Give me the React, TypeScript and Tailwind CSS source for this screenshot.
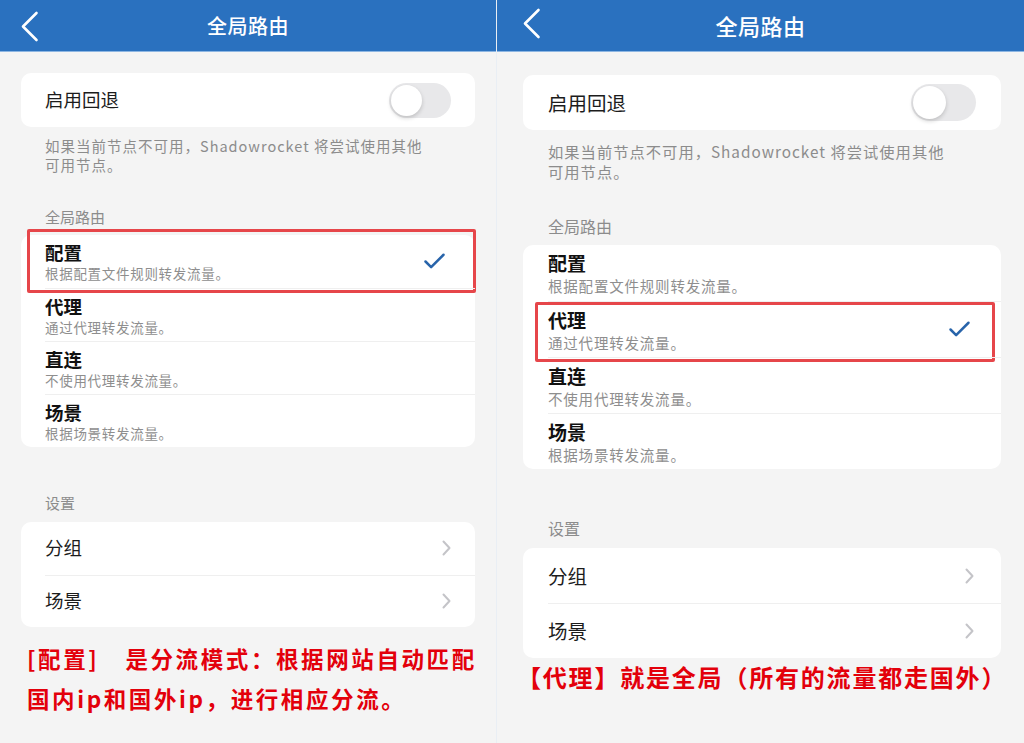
import React from "react";
import { Check } from "lucide-react";

type Size = {
  panel: string;
  header: string;
  back: string;
  title: string;
  body: string;
  card1: string;
  label: string;
  toggle: string;
  knob: string;
  desc: string;
  secLabel1: string;
  card2: string;
  row: string;
  rowInner: string;
  rowTitle: string;
  rowSub: string;
  secLabel2: string;
  card3: string;
  navRow: string;
  navInner: string;
  mark: string;
};

const L: Size = {
  panel: "w-[496px] shrink-0",
  header: "h-[52px]",
  back: "pl-[20px] pt-[2px]",
  title: "text-[20px]",
  body: "pt-[21px] px-[21px]",
  card1: "h-[54px] pl-[24px] pr-[24px]",
  label: "text-[18.5px]",
  toggle: "w-[62px] h-[35px]",
  knob: "w-[31px] h-[31px]",
  desc: "mt-[9px] pl-[24px] text-[14.5px] leading-[19px] tracking-[1px]",
  secLabel1: "mt-[33px] pl-[24px] text-[15px] leading-[20px]",
  card2: "mt-[8px]",
  row: "h-[53px] pl-[24px]",
  rowInner: "pr-[27px]",
  rowTitle: "text-[18.5px] leading-[23px]",
  rowSub: "text-[13.5px] leading-[18px] tracking-[0.7px]",
  secLabel2: "mt-[46px] pl-[24px] text-[15px] leading-[20px]",
  card3: "mt-[9px]",
  navRow: "h-[52.5px] pl-[24px]",
  navInner: "pr-[24px]",
  mark: "-top-[6px] -bottom-[5px] left-[6px] -right-[1px]",
};

const R: Size = {
  panel: "flex-1 min-w-0",
  header: "h-[52px]",
  back: "pl-[25px] -mt-[4px]",
  title: "text-[22px]",
  body: "pt-[23px] pl-[26px] pr-[23px]",
  card1: "h-[55px] pl-[25px] pr-[25px]",
  label: "text-[19.5px]",
  toggle: "w-[65px] h-[37px]",
  knob: "w-[33px] h-[33px]",
  desc: "mt-[11px] pl-[25px] text-[15.3px] leading-[20px] tracking-[1px]",
  secLabel1: "mt-[35px] pl-[25px] text-[16px] leading-[20px]",
  card2: "mt-[9px]",
  row: "h-[56px] pl-[25px]",
  rowInner: "pr-[28px]",
  rowTitle: "text-[19px] leading-[25px]",
  rowSub: "mt-[1px] text-[14.5px] leading-[20px] tracking-[0.8px]",
  secLabel2: "mt-[49px] pl-[25px] text-[16px] leading-[20px]",
  card3: "mt-[10px]",
  navRow: "h-[55px] pl-[25px]",
  navInner: "pr-[27px]",
  mark: "top-[1px] -bottom-[5px] left-[12px] right-[6px]",
};

const modes = [
  { title: "配置", sub: "根据配置文件规则转发流量。" },
  { title: "代理", sub: "通过代理转发流量。" },
  { title: "直连", sub: "不使用代理转发流量。" },
  { title: "场景", sub: "根据场景转发流量。" },
];

const Chevron = () => (
  <svg width="9" height="16" viewBox="0 0 9 16" fill="none">
    <path d="M1.5 1.5 L7.5 8 L1.5 14.5" stroke="#c4c4c8" strokeWidth="2" strokeLinecap="round" strokeLinejoin="round" />
  </svg>
);

const Panel = ({ s, selected, children }: { s: Size; selected: number; children: React.ReactNode }) => {
  return (
    <div className={`${s.panel} flex flex-col bg-[#f4f4f4]`}>
      {/* header */}
      <div className={`${s.header} grid grid-cols-[1fr_auto_1fr] items-center bg-[#2a71bf] border-b border-[#8db6e2]`}>
        <div className={s.back}>
          <svg width="19" height="31" viewBox="0 0 19 31" fill="none">
            <path d="M16.5 2 L3 15.5 L16.5 29" stroke="white" strokeWidth="2.6" strokeLinecap="round" strokeLinejoin="round" />
          </svg>
        </div>
        <p className={`${s.title} text-white font-medium tracking-[0.5px]`}>全局路由</p>
        <div />
      </div>

      <div className={s.body}>
        <div className={`${s.card1} bg-white rounded-[10px] flex items-center justify-between`}>
          <p className={`${s.label} text-[#1c1c1c]`}>启用回退</p>
          <div className={`${s.toggle} rounded-full bg-[#e8e8ea] p-[2px] flex items-center`}>
            <div className={`${s.knob} rounded-full bg-white shadow-[0_2px_4px_rgba(0,0,0,0.18)]`} />
          </div>
        </div>
        <p className={`${s.desc} text-[#8c8c8c]`}>
          如果当前节点不可用，Shadowrocket 将尝试使用其他
          <br />
          可用节点。
        </p>

        <p className={`${s.secLabel1} text-[#8c8c8c]`}>全局路由</p>
        <div className={`${s.card2} bg-white rounded-[10px]`}>
          {modes.map((m, i) => (
            <div key={m.title} className={`${s.row} relative`}>
              <div className={`${s.rowInner} h-full flex items-center justify-between ${i > 0 ? "border-t border-[#efefef]" : ""}`}>
                <div>
                  <p className={`${s.rowTitle} font-semibold text-[#111]`}>{m.title}</p>
                  <p className={`${s.rowSub} text-[#8e8e8e]`}>{m.sub}</p>
                </div>
                {i === selected && <Check size={27} strokeWidth={2.2} className="text-[#2864aa]" />}
              </div>
              {i === selected && (
                <div className={`${s.mark} absolute border-[3px] border-[#e6464a] rounded-[2px] pointer-events-none`} />
              )}
            </div>
          ))}
        </div>

        <p className={`${s.secLabel2} text-[#8c8c8c]`}>设置</p>
        <div className={`${s.card3} bg-white rounded-[10px]`}>
          {["分组", "场景"].map((t, i) => (
            <div key={t} className={s.navRow}>
              <div className={`${s.navInner} h-full flex items-center justify-between ${i > 0 ? "border-t border-[#efefef]" : ""}`}>
                <p className={`${s.label} text-[#1c1c1c]`}>{t}</p>
                <Chevron />
              </div>
            </div>
          ))}
        </div>
        {children}
      </div>
    </div>
  );
};

export default function App() {
  return (
    <div className="w-[1024px] h-[743px] flex bg-[#f4f4f4] overflow-hidden font-['Noto_Sans_CJK_SC',sans-serif]">
      <Panel s={L} selected={0}>
        <div className="mt-[11px] pl-[6px] text-[22.5px] leading-[40px] font-bold text-[#e3000b] tracking-[2.6px] whitespace-nowrap">
          <p>
            [配置]<span className="ml-[26px]">是分流模式：根据网站自动匹配</span>
          </p>
          <p>国内ip和国外ip，进行相应分流。</p>
        </div>
      </Panel>
      <div className="w-px shrink-0 bg-[#e9eef4]" />
      <Panel s={R} selected={1}>
        <p className="mt-[3px] -ml-[6px] text-[24px] leading-[32px] font-bold text-[#e3000b] tracking-[1.8px] whitespace-nowrap">
          【代理】就是全局（所有的流量都走国外）
        </p>
      </Panel>
    </div>
  );
}
